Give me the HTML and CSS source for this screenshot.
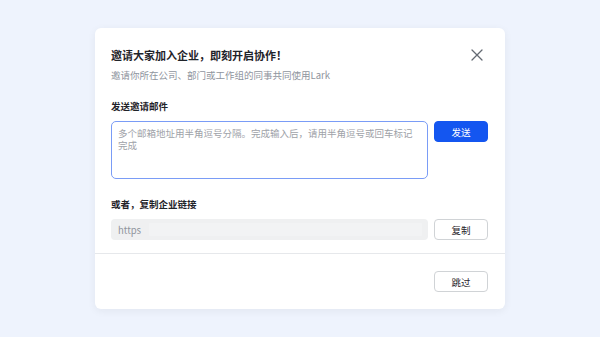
FILE: index.html
```html
<!DOCTYPE html>
<html lang="zh-CN">
<head>
<meta charset="utf-8">
<link rel="stylesheet" href="styles.css">
</head>
<body>
<div class="stage">
  <div class="dialog">
    <div class="body">
      <div class="head">
        <div class="title">邀请大家加入企业，即刻开启协作！</div>
        <svg class="close" width="12" height="12" viewBox="0 0 12 12"><path d="M1 1L11 11M11 1L1 11" stroke="#646a73" stroke-width="1.3" stroke-linecap="round"/></svg>
      </div>
      <div class="sub">邀请你所在公司、部门或工作组的同事共同使用Lark</div>
      <div class="label">发送邀请邮件</div>
      <div class="row">
        <div class="textarea">多个邮箱地址用半角逗号分隔。完成输入后，请用半角逗号或回车标记完成</div>
        <div class="btn primary">发送</div>
      </div>
      <div class="label">或者，复制企业链接</div>
      <div class="row">
        <div class="link"><span>https</span><span class="blur"></span></div>
        <div class="btn">复制</div>
      </div>
    </div>
    <div class="footer">
      <div class="btn">跳过</div>
    </div>
  </div>
</div>
</body>
</html>
```
FILE: styles.css
```css
html, body { margin: 0; padding: 0; }
body {
  background: #eef3fd;
  font-family: "Noto Sans CJK SC", "Noto Sans", sans-serif;
  color: #1f2329;
}
.stage {
  width: 600px;
  height: 337px;
  display: flex;
  align-items: center;
  justify-content: center;
}
.dialog {
  width: 410px;
  height: 281px;
  background: #fff;
  border-radius: 6px;
  box-shadow: 0 2px 8px rgba(31, 35, 41, 0.06);
  display: flex;
  flex-direction: column;
  box-sizing: border-box;
}
.body {
  padding: 20px 17px 13px 16px;
  border-bottom: 1px solid #e6e8eb;
}
.head {
  display: flex;
  justify-content: space-between;
  align-items: center;
  height: 14px;
}
.title {
  font-size: 11px;
  line-height: 14px;
  font-weight: 700;
  color: #1f2329;
}
.close { margin-right: 5px; }
.sub {
  margin-top: 7px;
  font-size: 9.5px;
  line-height: 12px;
  color: #8f959e;
}
.label {
  margin-top: 19px;
  font-size: 9.5px;
  line-height: 12px;
  font-weight: 700;
  color: #1f2329;
}
.row {
  margin-top: 9px;
  display: flex;
  gap: 6px;
  align-items: flex-start;
}
.textarea {
  width: 317px;
  height: 58px;
  box-sizing: border-box;
  border: 1px solid #7a9cf6;
  border-radius: 5px;
  padding: 5px 10px 0 6px;
  font-size: 9.5px;
  line-height: 12px;
  color: #9ea2a8;
}
.btn {
  width: 54px;
  height: 21px;
  box-sizing: border-box;
  border: 1px solid #d0d3d6;
  border-radius: 4px;
  display: flex;
  align-items: center;
  justify-content: center;
  font-size: 9.5px;
  color: #1f2329;
  background: #fff;
}
.btn.primary {
  background: #1456f0;
  border-color: #1456f0;
  color: #fff;
}
.link {
  width: 317px;
  height: 21px;
  box-sizing: border-box;
  background: #eff0f1;
  border-radius: 4px;
  display: flex;
  align-items: center;
  padding: 0 6px 0 7px;
  font-size: 9.5px;
  color: #8f959e;
}
.blur {
  flex: 1;
  height: 13px;
  margin-left: 8px;
  background: #f2f3f4;
  border-radius: 1px;
}
.footer {
  flex: 1;
  display: flex;
  justify-content: flex-end;
  padding: 17px 17px 0 0;
}
```
